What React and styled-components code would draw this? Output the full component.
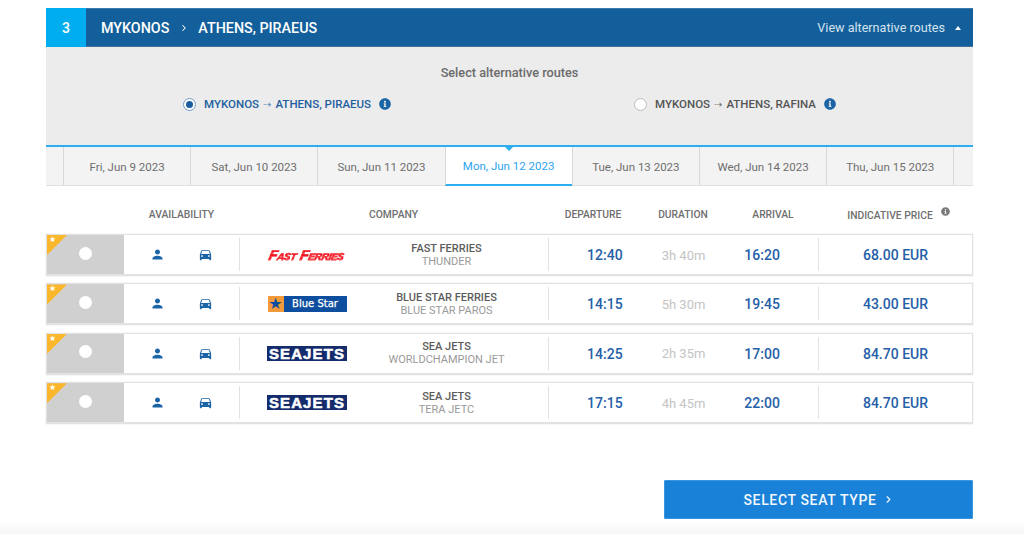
import styled, { createGlobalStyle } from "styled-components";
import { FaInfoCircle } from "react-icons/fa";
import { MdDirectionsCar, MdPerson } from "react-icons/md";
import { LuChevronRight } from "react-icons/lu";

const GlobalStyle = createGlobalStyle`
  html, body {
    margin: 0;
    background: #fff;
    font-family: Roboto, "Liberation Sans", sans-serif;
    overflow: hidden;
  }
  * { box-sizing: border-box; }
`;

const Page = styled.div`
  position: relative;
  width: 1024px;
  height: 534px;
  padding: 8px 51px 0 46px;
  overflow: hidden;
`;

const BottomFade = styled.div`
  position: absolute;
  left: 0;
  right: 0;
  bottom: 0;
  height: 14px;
  background: linear-gradient(#fff, #f6f6f6);
`;

const StepBar = styled.div`
  display: flex;
  align-items: center;
  height: 39px;
  background: #135f9b;
  color: #fff;
  border-top: 1px solid #3b78a8;
  border-bottom: 1px solid #44709a;
`;

const StepNumber = styled.div`
  width: 40px;
  height: 39px;
  margin: -1px 0;
  background: #00aeef;
  display: flex;
  align-items: center;
  justify-content: center;
  font-size: 14px;
  font-weight: 500;
`;

const StepRoute = styled.div`
  display: flex;
  align-items: center;
  margin-left: 15px;
  font-size: 14.3px;
  font-weight: 500;
  flex: 1;
  svg {
    margin: 0 9.5px;
    width: 10px;
    height: 10px;
    stroke-width: 2.5;
  }
`;

const AltToggle = styled.div`
  display: flex;
  align-items: center;
  font-size: 12.6px;
  color: #d4e2ee;
  padding-right: 12px;
`;

const Caret = styled.span`
  width: 0;
  height: 0;
  margin-left: 10px;
  border-left: 3.5px solid transparent;
  border-right: 3.5px solid transparent;
  border-bottom: 4px solid #fff;
`;

const RoutePanel = styled.div`
  height: 98px;
  background: #ececec;
  padding-top: 18px;
  text-align: center;
`;

const PanelTitle = styled.div`
  font-size: 12.7px;
  font-weight: 500;
  color: #6b6b6b;
  line-height: 15px;
`;

const RouteList = styled.div`
  display: flex;
  justify-content: center;
  gap: 243px;
  margin-top: 17px;
`;

const RouteOption = styled.label`
  display: flex;
  align-items: center;
  font-size: 11.5px;
  font-weight: 500;
  line-height: 15px;
  color: ${(p) => (p.$active ? "#1f5f9f" : "#555")};
`;

const Radio = styled.span`
  width: 13px;
  height: 13px;
  margin-right: 8px;
  border-radius: 50%;
  background: #fff;
  border: 1px solid ${(p) => (p.$active ? "#6f9cc4" : "#bbb")};
  display: flex;
  align-items: center;
  justify-content: center;
  &::after {
    content: "";
    width: 7px;
    height: 7px;
    border-radius: 50%;
    background: ${(p) => (p.$active ? "#1b5ea0" : "transparent")};
  }
`;

const RouteArrow = styled.span`
  margin: 0 4px;
  font-size: 10px;
  color: ${(p) => (p.$active ? "#5d8cb8" : "#777")};
  font-family: "DejaVu Sans", sans-serif;
`;

const InfoIcon = styled(FaInfoCircle)`
  width: 12px;
  height: 12px;
  margin-left: 8px;
  margin-top: -1px;
  color: #1b64a6;
`;

const DateTabs = styled.div`
  display: grid;
  grid-template-columns: 17px repeat(7, 127.2px) 1fr;
  height: 41px;
  background: #f3f3f3;
  border-top: 2px solid #2eaeef;
  border-bottom: 1px solid #e0e0e0;
`;

const DateTab = styled.div`
  position: relative;
  display: flex;
  align-items: center;
  justify-content: center;
  padding-top: 1px;
  font-size: 11.5px;
  color: ${(p) => (p.$active ? "#2ea4ee" : "#6e6e6e")};
  background: ${(p) => (p.$active ? "#fff" : "transparent")};
  border-left: 1px solid #d8d8d8;
  border-bottom: ${(p) => (p.$active ? "2px solid #2eaeef" : "none")};
  margin-bottom: ${(p) => (p.$active ? "-1px" : "0")};
  ${(p) =>
    p.$active &&
    `&::before {
      content: "";
      position: absolute;
      top: 0;
      left: 50%;
      margin-left: -4px;
      border-left: 4px solid transparent;
      border-right: 4px solid transparent;
      border-top: 4px solid #2eaeef;
    }`}
`;

const TableHead = styled.div`
  display: grid;
  grid-template-columns: 78px 115px 309px 90px 90px 90px 155px;
  height: 48px;
  align-items: center;
  padding-top: 8px;
  font-size: 10.3px;
  font-weight: 500;
  color: #6f6f6f;
`;

const HeadCell = styled.div`
  position: relative;
  text-align: center;
  white-space: nowrap;
`;

const PriceHead = styled(HeadCell)`
  padding-left: 6px;
`;

const PriceInfo = styled(FaInfoCircle)`
  width: 9px;
  height: 9px;
  margin-left: 8px;
  vertical-align: 3px;
  color: #7a7a7a;
`;

const Rows = styled.div`
  display: flex;
  flex-direction: column;
  gap: 7.4px;
`;

const Row = styled.div`
  display: grid;
  grid-template-columns: 77px 116px 134px 175px 270px 1fr;
  height: 42px;
  border: 1px solid #e2e2e2;
  border-bottom-width: 2px;
  box-shadow: 0 0 0 0.5px #eee;
`;

const SelectCell = styled.div`
  position: relative;
  background: #d0d0d0;
  display: flex;
  align-items: center;
  justify-content: center;
`;

const Ribbon = styled.span`
  position: absolute;
  top: 0;
  left: 0;
  width: 20px;
  height: 20px;
  background: #fbb72c;
  clip-path: polygon(0 0, 100% 0, 0 100%);
  color: #fff;
  font-size: 8px;
  line-height: 10px;
  padding-left: 2px;
  font-family: "DejaVu Sans", sans-serif;
`;

const RowRadio = styled.span`
  width: 13px;
  height: 13px;
  border-radius: 50%;
  background: #fff;
  margin-top: -3px;
`;

const AvailCell = styled.div`
  display: flex;
  align-items: center;
  justify-content: center;
  gap: 33px;
  margin: 3px 0;
  border-right: 1px solid #e2e2e2;
  color: #1b64a6;
  svg {
    width: 15px;
    height: 15px;
  }
`;

const LogoCell = styled.div`
  display: flex;
  align-items: center;
  justify-content: center;
`;

const CompanyCell = styled.div`
  display: flex;
  flex-direction: column;
  align-items: center;
  justify-content: center;
  margin: 3px 0;
  padding-right: 29px;
  border-right: 1px solid #e2e2e2;
  font-size: 11px;
  line-height: 13px;
  white-space: nowrap;
`;

const CompanyName = styled.div`
  font-weight: 500;
  color: #5c5c5c;
`;

const VesselName = styled.div`
  color: #9a9a9a;
`;

const TimesCell = styled.div`
  display: flex;
  align-items: center;
  justify-content: center;
  gap: 39px;
  margin: 3px 0;
  padding-top: 1px;
  border-right: 1px solid #e2e2e2;
`;

const Time = styled.div`
  font-size: 14px;
  font-weight: 500;
  color: #2560a8;
`;

const Duration = styled.div`
  font-size: 13px;
  color: #c4c4c4;
`;

const PriceCell = styled.div`
  display: flex;
  align-items: center;
  justify-content: center;
  padding-top: 1px;
  font-size: 14px;
  font-weight: 500;
  color: #2560a8;
`;

const FastFerriesLogo = styled.div`
  font-family: "Liberation Sans", sans-serif;
  font-size: 14.4px;
  line-height: 14px;
  font-weight: 700;
  font-style: italic;
  font-variant: small-caps;
  letter-spacing: -0.3px;
  white-space: nowrap;
  transform: skewX(-12deg);
  color: transparent;
  -webkit-text-stroke: 0.4px #f0141e;
  background: repeating-linear-gradient(#f0141e 0 2px, #ff6a72 2px 3px);
  -webkit-background-clip: text;
  background-clip: text;
`;

const BlueStarLogo = styled.div`
  display: flex;
  width: 79px;
  height: 16px;
  background: #0d4f9e;
`;

const StarBox = styled.span`
  width: 16px;
  height: 16px;
  background: #f39a3a;
  color: #0d4f9e;
  font-size: 16px;
  line-height: 15px;
  text-align: center;
  font-family: "DejaVu Sans", sans-serif;
`;

const BlueStarText = styled.span`
  flex: 1;
  text-align: center;
  color: #fff;
  font-family: "DejaVu Sans", sans-serif;
  font-size: 10px;
  font-weight: 400;
  line-height: 16px;
  -webkit-text-stroke: 0.25px #fff;
`;

const SeaJetsLogo = styled.div`
  width: 80px;
  height: 15px;
  background: #142c6c;
  color: #fff;
  font-family: "Liberation Sans", sans-serif;
  font-size: 15px;
  font-weight: 700;
  line-height: 15px;
  text-align: center;
  letter-spacing: 1.1px;
  -webkit-text-stroke: 0.5px #fff;
`;

const Footer = styled.div`
  display: flex;
  justify-content: flex-end;
  margin-top: 56px;
`;

const NextButton = styled.button`
  position: relative;
  z-index: 1;
  display: flex;
  align-items: center;
  justify-content: center;
  width: 309px;
  height: 39px;
  border: 1px solid #3a95e0;
  border-radius: 1px;
  background: #1982d8;
  color: #f2f7fc;
  font-family: inherit;
  font-size: 14px;
  font-weight: 500;
  letter-spacing: 0.65px;
  svg {
    width: 11px;
    height: 11px;
    margin-left: 6px;
    stroke-width: 2.5;
  }
`;

const dates = [
  "Fri, Jun 9 2023",
  "Sat, Jun 10 2023",
  "Sun, Jun 11 2023",
  "Mon, Jun 12 2023",
  "Tue, Jun 13 2023",
  "Wed, Jun 14 2023",
  "Thu, Jun 15 2023",
];

const BlueStar = () => (
  <BlueStarLogo>
    <StarBox>★</StarBox>
    <BlueStarText>Blue Star</BlueStarText>
  </BlueStarLogo>
);

const trips = [
  {
    logo: <FastFerriesLogo>Fast Ferries</FastFerriesLogo>,
    company: "FAST FERRIES",
    vessel: "THUNDER",
    dep: "12:40",
    dur: "3h 40m",
    arr: "16:20",
    price: "68.00 EUR",
  },
  {
    logo: <BlueStar />,
    company: "BLUE STAR FERRIES",
    vessel: "BLUE STAR PAROS",
    dep: "14:15",
    dur: "5h 30m",
    arr: "19:45",
    price: "43.00 EUR",
  },
  {
    logo: <SeaJetsLogo>SEAJETS</SeaJetsLogo>,
    company: "SEA JETS",
    vessel: "WORLDCHAMPION JET",
    dep: "14:25",
    dur: "2h 35m",
    arr: "17:00",
    price: "84.70 EUR",
  },
  {
    logo: <SeaJetsLogo>SEAJETS</SeaJetsLogo>,
    company: "SEA JETS",
    vessel: "TERA JETC",
    dep: "17:15",
    dur: "4h 45m",
    arr: "22:00",
    price: "84.70 EUR",
  },
];

const App = () => {
  return (
    <Page>
      <GlobalStyle />
      <StepBar>
        <StepNumber>3</StepNumber>
        <StepRoute>
          MYKONOS
          <LuChevronRight />
          ATHENS, PIRAEUS
        </StepRoute>
        <AltToggle>
          View alternative routes
          <Caret />
        </AltToggle>
      </StepBar>

      <RoutePanel>
        <PanelTitle>Select alternative routes</PanelTitle>
        <RouteList>
          <RouteOption $active>
            <Radio $active />
            MYKONOS<RouteArrow $active>⇢</RouteArrow>ATHENS, PIRAEUS
            <InfoIcon />
          </RouteOption>
          <RouteOption>
            <Radio />
            MYKONOS<RouteArrow>⇢</RouteArrow>ATHENS, RAFINA
            <InfoIcon />
          </RouteOption>
        </RouteList>
      </RoutePanel>

      <DateTabs>
        <span />
        {dates.map((d, i) => (
          <DateTab key={d} $active={i === 3}>
            {d}
          </DateTab>
        ))}
        <DateTab />
      </DateTabs>

      <TableHead>
        <span />
        <HeadCell>AVAILABILITY</HeadCell>
        <HeadCell>COMPANY</HeadCell>
        <HeadCell>DEPARTURE</HeadCell>
        <HeadCell>DURATION</HeadCell>
        <HeadCell>ARRIVAL</HeadCell>
        <PriceHead>
          INDICATIVE PRICE
          <PriceInfo />
        </PriceHead>
      </TableHead>

      <Rows>
        {trips.map((t) => (
          <Row key={t.vessel}>
            <SelectCell>
              <Ribbon>★</Ribbon>
              <RowRadio />
            </SelectCell>
            <AvailCell>
              <MdPerson />
              <MdDirectionsCar />
            </AvailCell>
            <LogoCell>{t.logo}</LogoCell>
            <CompanyCell>
              <CompanyName>{t.company}</CompanyName>
              <VesselName>{t.vessel}</VesselName>
            </CompanyCell>
            <TimesCell>
              <Time>{t.dep}</Time>
              <Duration>{t.dur}</Duration>
              <Time>{t.arr}</Time>
            </TimesCell>
            <PriceCell>{t.price}</PriceCell>
          </Row>
        ))}
      </Rows>

      <Footer>
        <NextButton>
          SELECT SEAT TYPE
          <LuChevronRight />
        </NextButton>
      </Footer>
      <BottomFade />
    </Page>
  );
};

export default App;
